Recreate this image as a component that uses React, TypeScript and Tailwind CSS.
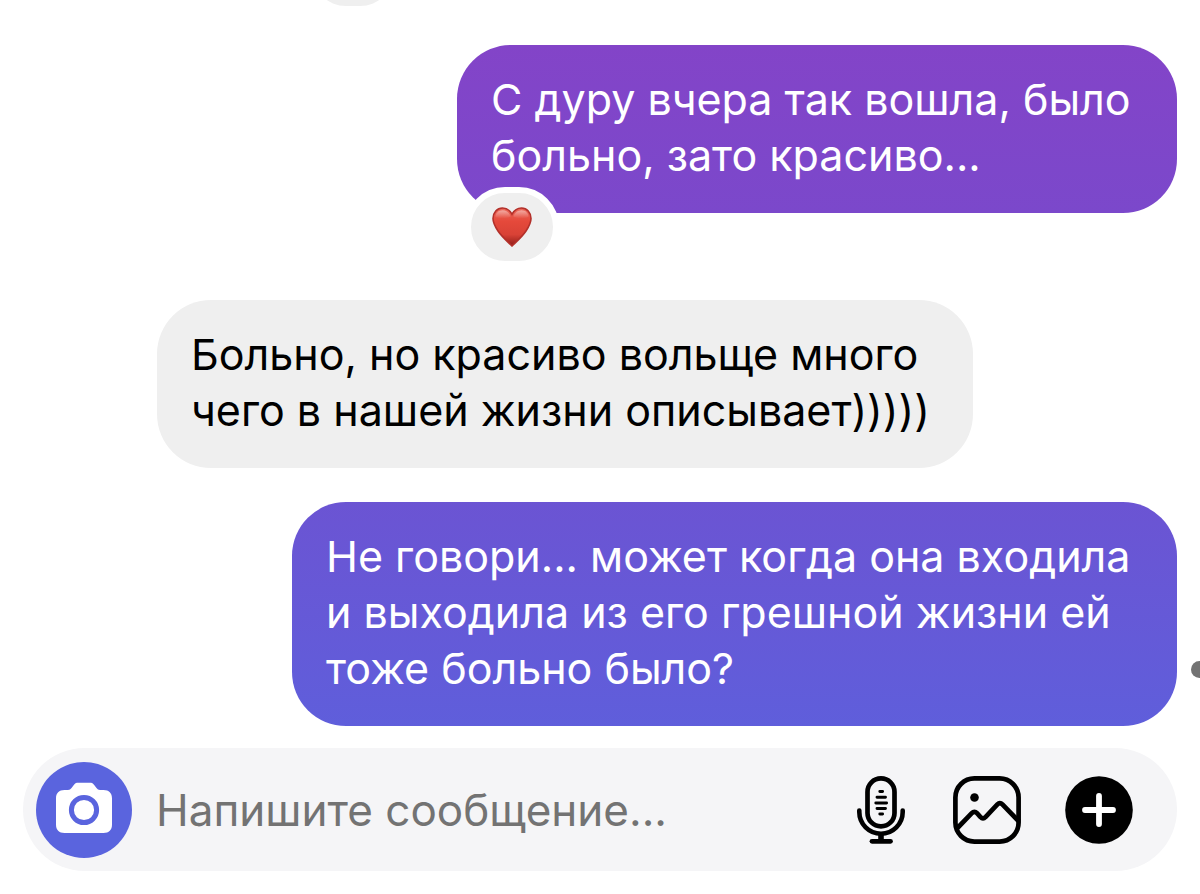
import type { ReactNode } from "react";

interface Message {
  id: number;
  lines: string[];
  bubble: string;
  align: string;
  liked?: boolean;
}

const messages: Message[] = [
  {
    id: 1,
    lines: ["С дуру вчера так вошла, было", "больно, зато красиво..."],
    bubble: "w-[720px] bg-linear-to-b from-[#8344c8] to-[#7b48cb] text-white",
    align: "justify-end mb-[87px]",
    liked: true,
  },
  {
    id: 2,
    lines: ["Больно, но красиво вольще много", "чего в нашей жизни описывает)))))"],
    bubble: "w-[816px] bg-[#efefef] text-black",
    align: "justify-start pl-[134px] mb-[34px]",
  },
  {
    id: 3,
    lines: [
      "Не говори... может когда она входила",
      "и выходила из его грешной жизни ей",
      "тоже больно было?",
    ],
    bubble: "w-[885px] bg-linear-to-b from-[#6b54d3] to-[#5f5edb] text-white",
    align: "justify-end",
  },
];

function Heart() {
  return (
    <svg className="h-10 w-10" viewBox="0 0 40 40" role="img" aria-label="Нравится">
      <defs>
        <linearGradient id="heartFill" x1="0" y1="0" x2="0" y2="1">
          <stop offset="0" stopColor="#ea6a5c" />
          <stop offset="0.35" stopColor="#e5493b" />
          <stop offset="0.7" stopColor="#d94236" />
          <stop offset="1" stopColor="#8e1c18" />
        </linearGradient>
        <linearGradient id="heartShine" x1="0" y1="0" x2="0" y2="1">
          <stop offset="0" stopColor="#fff" stopOpacity="0.45" />
          <stop offset="1" stopColor="#fff" stopOpacity="0" />
        </linearGradient>
      </defs>
      <path
        d="M20 39C16.500 35.500 10 30 6 24 3 19.500 1 15.500 1 11.500 1 5.500 5.200 1 10.500 1c4.200 0 7.500 2.500 9.500 6.200C22 3.500 25.300 1 29.500 1 34.800 1 39 5.500 39 11.500c0 4-2 8-5 12.500-4 6-10.500 11.500-14 15z"
        fill="url(#heartFill)"
        stroke="#b3302a"
        strokeWidth="1.600"
      />
      <path d="M3.500 10c0-4 3-6.800 7-6.800s7 2.800 8.200 6.300C14 12 8 12 3.500 10z" fill="url(#heartShine)" />
      <path d="M36.500 10c0-4-3-6.800-7-6.800s-7 2.800-8.200 6.300C26 12 32 12 36.500 10z" fill="url(#heartShine)" />
    </svg>
  );
}

function CameraIcon() {
  return (
    <svg className="-mt-1 h-[52px] w-14" viewBox="0 0 56 52" aria-hidden="true">
      <path
        d="M8.500 8H12c1.500 0 2.600-.8 3.500-2l2.500-3.300C19.300 1 20.500.7 22.300.7h11.400c1.800 0 3 .3 4.300 2L40.500 6c.9 1.200 2 2 3.500 2h3.500c5.500 0 8.500 3 8.500 8.500V42.500c0 5.500-3 8.500-8.500 8.500h-39C3 51 0 48 0 42.500V16.500C0 11 3 8 8.500 8z"
        fill="#fff"
      />
      <circle cx="28" cy="28" r="12.600" fill="#fff" stroke="#5a64de" strokeWidth="5" />
    </svg>
  );
}

function MicIcon() {
  return (
    <svg className="h-[68px] w-14" viewBox="-4 0 56 68" fill="none" stroke="#000" strokeLinecap="round" aria-hidden="true">
      <rect x="10.500" y="2.400" width="27" height="48" rx="13.500" strokeWidth="4.700" />
      <path d="M2.300 34.500v1.500a21.700 21.700 0 0 0 43.400 0v-1.500" strokeWidth="4.600" />
      <path d="M24 58v6" strokeWidth="5.600" strokeLinecap="butt" />
      <path d="M15 65.300h18.500" strokeWidth="4.800" />
      <path d="M22.800 15.500h2.800M20 21.200h8.500M18.800 27h10.800M20 32.500h8.500M22.800 38h2.800" strokeWidth="2.900" />
    </svg>
  );
}

function GalleryIcon() {
  return (
    <svg className="h-[68px] w-[68px]" viewBox="0 0 68 68" fill="none" stroke="#000" strokeWidth="4.700" strokeLinejoin="round" aria-hidden="true">
      <rect x="2.400" y="2.400" width="63.200" height="63.200" rx="19" />
      <circle cx="21.500" cy="21.500" r="4.300" fill="#000" stroke="none" />
      <path d="M3 53.500 18.800 37.200c1.700-1.800 3.500-1.800 5.200 0l3.300 3.600c1.800 1.800 3.600 1.800 5.400 0L44.400 28.400c1.700-1.800 3.300-1.800 5 0L66 45.500" />
    </svg>
  );
}

function PlusIcon() {
  return (
    <svg className="h-[68px] w-[68px]" viewBox="0 0 68 68" aria-hidden="true">
      <circle cx="34" cy="34" r="33.800" fill="#000" />
      <path d="M34 20v28M20 34h28" stroke="#fff" strokeWidth="5.800" strokeLinecap="round" />
    </svg>
  );
}

function IconButton({ label, children }: { label: string; children: ReactNode }) {
  return (
    <button type="button" aria-label={label} className="shrink-0">
      {children}
    </button>
  );
}

function Bubble({ message }: { message: Message }) {
  return (
    <li className={`flex ${message.align}`}>
      <div className={`relative max-w-full rounded-[54px] px-[34px] pt-[26px] pb-[30px] ${message.bubble}`}>
        <p className="whitespace-pre-line">{message.lines.join("\n")}</p>
        {message.liked && (
          <span className="absolute -bottom-[54px] left-2 flex h-20 w-[94px] items-center justify-center rounded-full border-6 border-white bg-[#efefef]">
            <Heart />
          </span>
        )}
      </div>
    </li>
  );
}

export default function App() {
  return (
    <main className="relative min-h-screen overflow-hidden bg-white px-[23px] pt-[45px] pb-6 font-['Inter',sans-serif] text-[43px] leading-[56px]">
      {/* Reaction of the message scrolled out above */}
      <span className="absolute -top-[62px] left-[312px] h-[68px] w-[82px] rounded-full bg-[#efefef]" />
      {/* Swipe hint at the edge */}
      <span className="absolute top-[661px] -right-2 h-[17px] w-[17px] rounded-full bg-[#737373]" />

      <ul>
        {messages.map((message) => (
          <Bubble key={message.id} message={message} />
        ))}
      </ul>

      <form
        className="mt-[22px] flex h-[123px] items-center rounded-full bg-[#f5f5f7] pr-11 pl-[13px]"
        onSubmit={(e) => e.preventDefault()}
      >
        <button
          type="button"
          aria-label="Камера"
          className="flex h-24 w-24 shrink-0 items-center justify-center rounded-full bg-[#5a64de]"
        >
          <CameraIcon />
        </button>
        <input
          type="text"
          aria-label="Напишите сообщение"
          placeholder="Напишите сообщение..."
          className="ml-6 h-14 min-w-0 flex-1 bg-transparent text-[44px] outline-none placeholder:text-[#737373]"
        />
        <div className="flex items-center gap-11">
          <IconButton label="Голосовое сообщение">
            <MicIcon />
          </IconButton>
          <IconButton label="Галерея">
            <GalleryIcon />
          </IconButton>
          <IconButton label="Ещё">
            <PlusIcon />
          </IconButton>
        </div>
      </form>
    </main>
  );
}
